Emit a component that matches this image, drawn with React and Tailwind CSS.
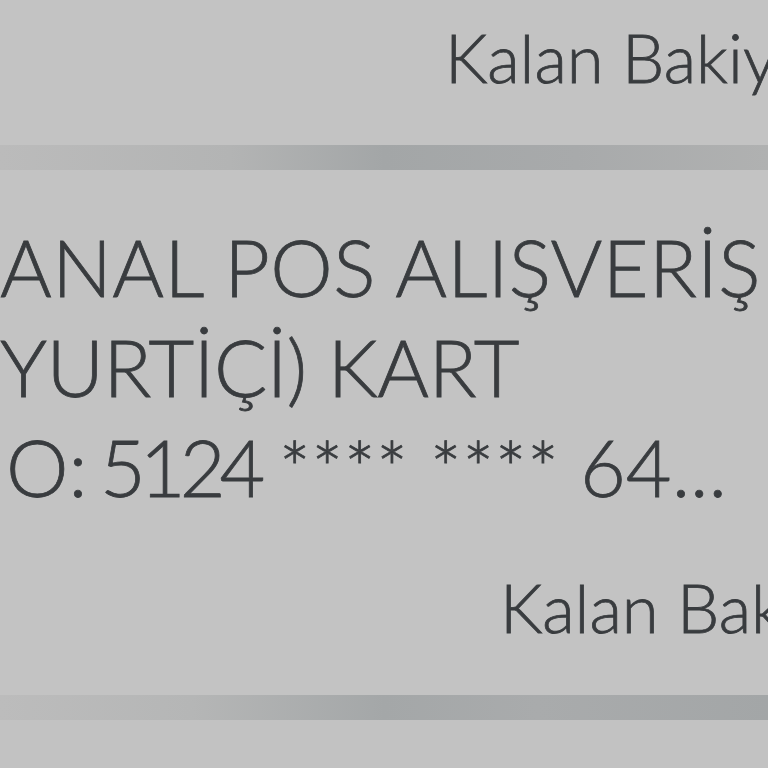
export default function App() {
  const font = { fontFamily: "Lato, 'Open Sans', sans-serif" };
  return (
    <div className="w-[768px] h-[768px] overflow-hidden bg-[#c3c3c3] text-[#393c3f] flex flex-col font-light [-webkit-text-stroke:0.8px_#393c3f]" style={font}>
      <div className="h-[145px] shrink-0 pt-[17px] pl-[445px] whitespace-nowrap overflow-hidden">
        <div className="text-[67px] leading-[80px]">Kalan Bakiye</div>
      </div>
      <div className="h-[25px] shrink-0 bg-[linear-gradient(to_right,#bbbbbb_0%,#b3b4b4_30%,#a3a6a7_50%,#a8aaab_75%,#b0b1b1_100%)]" />
      <div className="h-[525px] shrink-0 flex flex-col whitespace-nowrap overflow-hidden pt-[47px]">
        <div className="text-[79px] leading-[100px] tracking-[0.4px]">ANAL POS ALIŞVERİŞ</div>
        <div className="text-[79px] leading-[100px] tracking-[-0.5px]">YURTİÇİ) KART</div>
        <div className="text-[79px] leading-[100px] flex items-baseline">
          <span className="ml-[6px] w-[94px]">O:</span>
          <span className="w-[179px] tracking-[-6px]">5124</span>
          <span className="w-[151px] text-[74px] tracking-[1px]">****</span>
          <span className="w-[150px] text-[74px] tracking-[1px]">****</span>
          <span className="tracking-[0px]">64...</span>
        </div>
        <div className="pt-[48px] pl-[500px] text-[67px] leading-[80px]">Kalan Bakiye</div>
      </div>
      <div className="h-[25px] shrink-0 bg-[linear-gradient(to_right,#bcbcbc_0%,#b5b6b6_25%,#a4a7a8_50%,#a9abac_70%,#a3a6a7_100%)]" />
      <div className="flex-1 bg-[#c2c2c2]" />
    </div>
  );
}
